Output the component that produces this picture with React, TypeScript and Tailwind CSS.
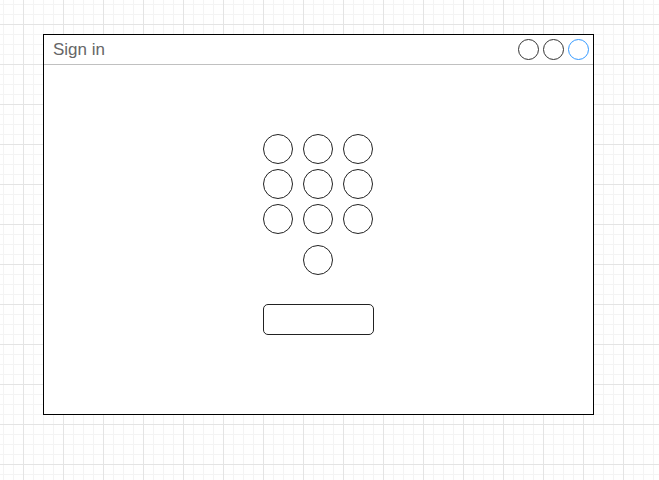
const KEYS = Array.from({ length: 9 }, (_, i) => i);

const Dot = ({ className = "" }: { className?: string }) => (
  <div className={`rounded-full border bg-white ${className}`} />
);

export default function App() {
  return (
    <div
      className="h-[480px] w-full pl-[43px] pt-[34px] bg-white bg-[linear-gradient(to_right,#e4e4e4_1px,transparent_1px),linear-gradient(to_bottom,#e4e4e4_1px,transparent_1px),linear-gradient(to_right,#f4f4f4_1px,transparent_1px),linear-gradient(to_bottom,#f4f4f4_1px,transparent_1px)] bg-[size:40px_40px,40px_40px,10px_10px,10px_10px] bg-[position:23px_24px,23px_24px,3px_4px,3px_4px]"
      style={{ fontFamily: '"Liberation Sans", Arial, sans-serif' }}
    >
      <div className="flex h-[381px] w-[551px] flex-col border border-black bg-white">
        <div className="flex h-[30px] items-center justify-between border-b border-[#c0c0c0] pl-[9px] pr-[4px]">
          <span className="text-[17px] leading-none text-[#666666]">Sign in</span>
          <div className="flex gap-[4px]">
            <Dot className="h-[21px] w-[21px] border-[#333333]" />
            <Dot className="h-[21px] w-[21px] border-[#333333]" />
            <Dot className="h-[21px] w-[21px] border-[#3399ff]" />
          </div>
        </div>

        <div className="flex flex-col items-center pr-[1px] pt-[69px]">
          <div className="grid grid-cols-3 gap-x-[10px] gap-y-[5px]">
            {KEYS.map((k) => (
              <Dot key={k} className="h-[30px] w-[30px] border-[#222222]" />
            ))}
          </div>
          <Dot className="mt-[11px] h-[30px] w-[30px] border-[#222222]" />
          <div className="mt-[29px] h-[31px] w-[111px] rounded-[5px] border border-[#222222] bg-white" />
        </div>
      </div>
    </div>
  );
}
